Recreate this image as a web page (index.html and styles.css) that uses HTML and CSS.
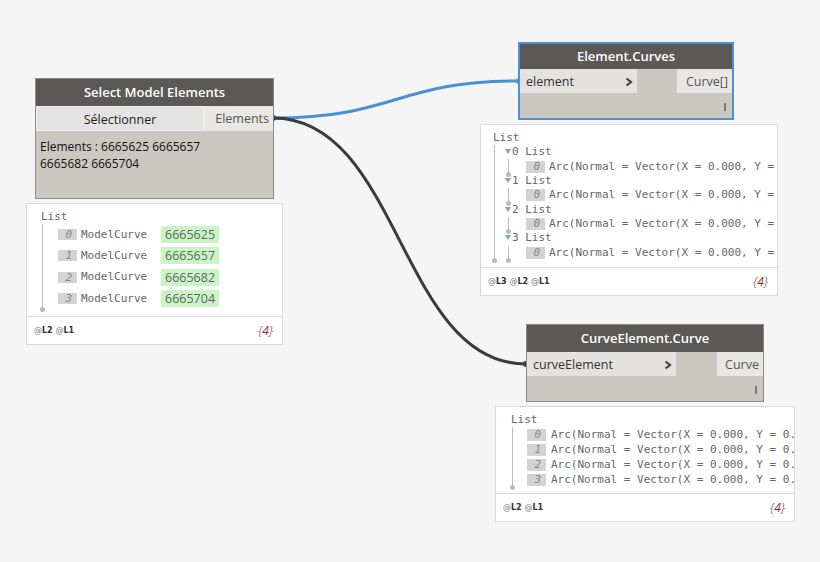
FILE: index.html
```html
<!DOCTYPE html>
<html lang="fr">
<head>
    <meta charset="UTF-8">
    <title>Dynamo - Select Model Elements</title>
<link rel="stylesheet" href="styles.css">
</head>
<body>
    <div class="canvas">
        <svg class="wires" width="820" height="562" viewBox="0 0 820 562">
            <path class="wire wire--blue" d="M273,118 C396,118 396,81 519,81"/>
            <path class="wire wire--dark" d="M273,118 C400,118 400,364 526,364"/>
            <circle cx="273" cy="118" r="3" fill="#3b3b3b"/>
            <circle cx="519" cy="81" r="3" fill="#4a90d2"/>
            <circle cx="526" cy="364" r="3" fill="#3b3b3b"/>
        </svg>

        <!-- Select Model Elements -->
        <div class="node node--select">
            <div class="node__header">Select Model Elements</div>
            <div class="node__row">
                <div class="node__button">Sélectionner</div>
                <div class="node__out">Elements</div>
            </div>
            <div class="node__body node__body--text">
                Elements : 6665625 6665657<br>6665682 6665704
            </div>
        </div>

        <div class="preview preview--select">
            <div class="preview__content">
                <div class="tree__label">List</div>
                <div class="tree tree--select">
                    <div class="tree__row"><span class="tree__idx">0</span><span class="tree__name">ModelCurve</span><span class="tree__value">6665625</span></div>
                    <div class="tree__row"><span class="tree__idx">1</span><span class="tree__name">ModelCurve</span><span class="tree__value">6665657</span></div>
                    <div class="tree__row"><span class="tree__idx">2</span><span class="tree__name">ModelCurve</span><span class="tree__value">6665682</span></div>
                    <div class="tree__row"><span class="tree__idx">3</span><span class="tree__name">ModelCurve</span><span class="tree__value">6665704</span></div>
                </div>
            </div>
            <div class="preview__footer">
                <span class="levels"><i>@</i>L2 <i>@</i>L1</span>
                <span class="count">{<b>4</b>}</span>
            </div>
        </div>

        <!-- Element.Curves -->
        <div class="node node--curves node--selected">
            <div class="node__header">Element.Curves</div>
            <div class="node__row">
                <div class="node__in">element
                    <svg class="chevron" width="8" height="10" viewBox="0 0 8 10"><polyline points="1.5,1.5 6,5 1.5,8.5"/></svg>
                </div>
                <div class="node__gap"></div>
                <div class="node__out">Curve[]</div>
            </div>
            <div class="node__body"><span class="lacing"></span></div>
        </div>

        <div class="preview preview--curves">
            <div class="preview__content">
                <div class="tree__label">List</div>
                <div class="tree tree--nested">
                    <div class="sub">
                        <div class="sub__label"><span class="arrow"></span>0 List</div>
                        <div class="sub__items">
                            <div class="tree__row"><span class="tree__idx">0</span>Arc(Normal = Vector(X = 0.000, Y =</div>
                        </div>
                    </div>
                    <div class="sub">
                        <div class="sub__label"><span class="arrow"></span>1 List</div>
                        <div class="sub__items">
                            <div class="tree__row"><span class="tree__idx">0</span>Arc(Normal = Vector(X = 0.000, Y =</div>
                        </div>
                    </div>
                    <div class="sub">
                        <div class="sub__label"><span class="arrow"></span>2 List</div>
                        <div class="sub__items">
                            <div class="tree__row"><span class="tree__idx">0</span>Arc(Normal = Vector(X = 0.000, Y =</div>
                        </div>
                    </div>
                    <div class="sub">
                        <div class="sub__label"><span class="arrow"></span>3 List</div>
                        <div class="sub__items">
                            <div class="tree__row"><span class="tree__idx">0</span>Arc(Normal = Vector(X = 0.000, Y =</div>
                        </div>
                    </div>
                </div>
            </div>
            <div class="preview__footer">
                <span class="levels"><i>@</i>L3 <i>@</i>L2 <i>@</i>L1</span>
                <span class="count">{<b>4</b>}</span>
            </div>
        </div>

        <!-- CurveElement.Curve -->
        <div class="node node--curve">
            <div class="node__header">CurveElement.Curve</div>
            <div class="node__row">
                <div class="node__in">curveElement
                    <svg class="chevron" width="8" height="10" viewBox="0 0 8 10"><polyline points="1.5,1.5 6,5 1.5,8.5"/></svg>
                </div>
                <div class="node__gap"></div>
                <div class="node__out">Curve</div>
            </div>
            <div class="node__body"><span class="lacing"></span></div>
        </div>

        <div class="preview preview--curve">
            <div class="preview__content">
                <div class="tree__label">List</div>
                <div class="tree tree--curve">
                    <div class="tree__row"><span class="tree__idx">0</span>Arc(Normal = Vector(X = 0.000, Y = 0.</div>
                    <div class="tree__row"><span class="tree__idx">1</span>Arc(Normal = Vector(X = 0.000, Y = 0.</div>
                    <div class="tree__row"><span class="tree__idx">2</span>Arc(Normal = Vector(X = 0.000, Y = 0.</div>
                    <div class="tree__row"><span class="tree__idx">3</span>Arc(Normal = Vector(X = 0.000, Y = 0.</div>
                </div>
            </div>
            <div class="preview__footer">
                <span class="levels"><i>@</i>L2 <i>@</i>L1</span>
                <span class="count">{<b>4</b>}</span>
            </div>
        </div>
    </div>
</body>
</html>
```

FILE: styles.css
```css
* {
    margin: 0;
    padding: 0;
    box-sizing: border-box;
}
body {
    background: #f5f5f5;
    font: 12px/16px "Open Sans", "Noto Sans", sans-serif;
    color: #222;
}
.canvas {
    position: relative;
    width: 820px;
    height: 562px;
    overflow: hidden;
}
.wires {
    position: absolute;
    left: 0;
    top: 0;
}
.wire {
    fill: none;
    stroke-width: 3;
}
.wire--blue {
    stroke: #4a90d2;
}
.wire--dark {
    stroke: #3b3b3b;
}

/* nodes */
.node {
    position: absolute;
    display: flex;
    flex-direction: column;
    border: 1px solid #8d8b87;
    background: #cbc8c1;
}
.node--select {
    left: 35px;
    top: 78px;
    width: 239px;
    height: 121px;
}
.node--curves {
    left: 518px;
    top: 42px;
    width: 216px;
    height: 78px;
}
.node--selected {
    border: 2px solid #4a90d2;
}
.node--curve {
    left: 526px;
    top: 324px;
    width: 238px;
    height: 78px;
}
.node__header {
    flex-shrink: 0;
    height: 27px;
    background: #5b5956;
    color: #fff;
    font-weight: 600;
    font-size: 13px;
    line-height: 27px;
    text-align: center;
}
.node--curves .node__header {
    height: 25px;
    line-height: 25px;
}
.node__row {
    flex-shrink: 0;
    display: flex;
    height: 24px;
    line-height: 26px;
    font-size: 12.5px;
}
.node--select .node__row {
    height: 25px;
    line-height: 25px;
}
.node__button {
    width: 168px;
    background: #e3e3e3;
    border: 1px solid #f2f2f2;
    text-align: center;
    color: #222;
}
.node__out {
    flex: 1;
    background: #e8e7e3;
    color: #555;
    text-align: right;
    padding-right: 4px;
}
.node__in {
    display: flex;
    justify-content: space-between;
    align-items: center;
    background: #e3e2de;
    color: #333;
    padding: 1px 4px 0 6px;
}
.node--curves .node__in {
    width: 117px;
}
.node--curve .node__in {
    width: 149px;
}
.node--curves .node__gap {
    width: 40px;
}
.node--curve .node__gap {
    width: 41px;
}
.chevron {
    fill: none;
    stroke: #444;
    stroke-width: 2.2;
}
.node__body {
    flex: 1;
    display: flex;
    justify-content: flex-end;
    align-items: flex-end;
    padding: 0 6px 7px 0;
}
.node__body--text {
    display: block;
    padding: 7px 4px;
    line-height: 17px;
    color: #111;
}
.lacing {
    width: 2px;
    height: 8px;
    background: #777;
}

/* previews */
.preview {
    position: absolute;
    display: flex;
    flex-direction: column;
    background: #fff;
    border: 1px solid #d9d9d9;
    font: 11px/14px "DejaVu Sans Mono", "Liberation Mono", monospace;
    color: #666;
    overflow: hidden;
}
.preview--select {
    left: 26px;
    top: 203px;
    width: 257px;
    height: 142px;
}
.preview--curves {
    left: 480px;
    top: 124px;
    width: 298px;
    height: 172px;
}
.preview--curve {
    left: 495px;
    top: 406px;
    width: 300px;
    height: 116px;
}
.preview__content {
    flex: 1;
    padding: 6px 0 0 14px;
    white-space: nowrap;
}
.preview--curves .preview__content {
    padding-left: 12px;
}
.preview--curve .preview__content {
    padding-left: 15px;
}
.tree__label {
    height: 14px;
}
.tree {
    position: relative;
    border-left: 1px solid #bbb;
    margin-left: 1px;
}
.tree::after,
.sub__items::after {
    content: "";
    position: absolute;
    left: -3px;
    bottom: -3px;
    width: 5px;
    height: 5px;
    border-radius: 50%;
    background: #bbb;
}
.tree__row {
    display: flex;
    align-items: center;
}
.tree__idx {
    flex-shrink: 0;
    width: 19px;
    height: 12px;
    margin-right: 4px;
    background: #d3d3d3;
    color: #888;
    font-style: italic;
    line-height: 12px;
    text-align: right;
    padding-right: 5px;
}
.tree--select {
    padding: 0 0 0 15px;
}
.tree--select .tree__row {
    height: 21.3px;
}
.tree--select .tree__idx {
    height: 11px;
    line-height: 11px;
}
.tree__name {
    width: 80px;
}
.tree__value {
    height: 17px;
    padding: 0 4px;
    background: #c9f5c6;
    font: 12.5px/17px "Open Sans", "Noto Sans", sans-serif;
    color: #666;
}
.tree--curve {
    padding-left: 14px;
}
.tree--curve .tree__row {
    height: 15px;
}
.tree--curve .tree__idx {
    margin-right: 5px;
}
.tree--nested {
    padding-left: 10px;
}
.sub__label {
    position: relative;
    height: 14.4px;
    line-height: 14.4px;
}
.arrow {
    display: inline-block;
    width: 0;
    height: 0;
    margin-right: 1px;
    vertical-align: 1px;
    border-left: 3.5px solid transparent;
    border-right: 3.5px solid transparent;
    border-top: 5px solid #7ba6cc;
}
.sub__items {
    position: relative;
    border-left: 1px solid #bbb;
    margin-left: 3px;
    padding-left: 17px;
}
.sub__items .tree__row {
    height: 14.4px;
}
.preview__footer {
    flex-shrink: 0;
    display: flex;
    justify-content: space-between;
    align-items: center;
    height: 28px;
    border-top: 1px solid #dcdcdc;
    padding: 0 9px 0 7px;
}
.levels {
    font: bold 8px/10px "DejaVu Sans", sans-serif;
    color: #333;
}
.levels i {
    font-style: normal;
    font-weight: normal;
    color: #777;
}
.count {
    font: italic 12px/14px "Open Sans", "Noto Sans", sans-serif;
    color: #888;
}
.count b {
    font-weight: normal;
    color: #a3241f;
}
```
